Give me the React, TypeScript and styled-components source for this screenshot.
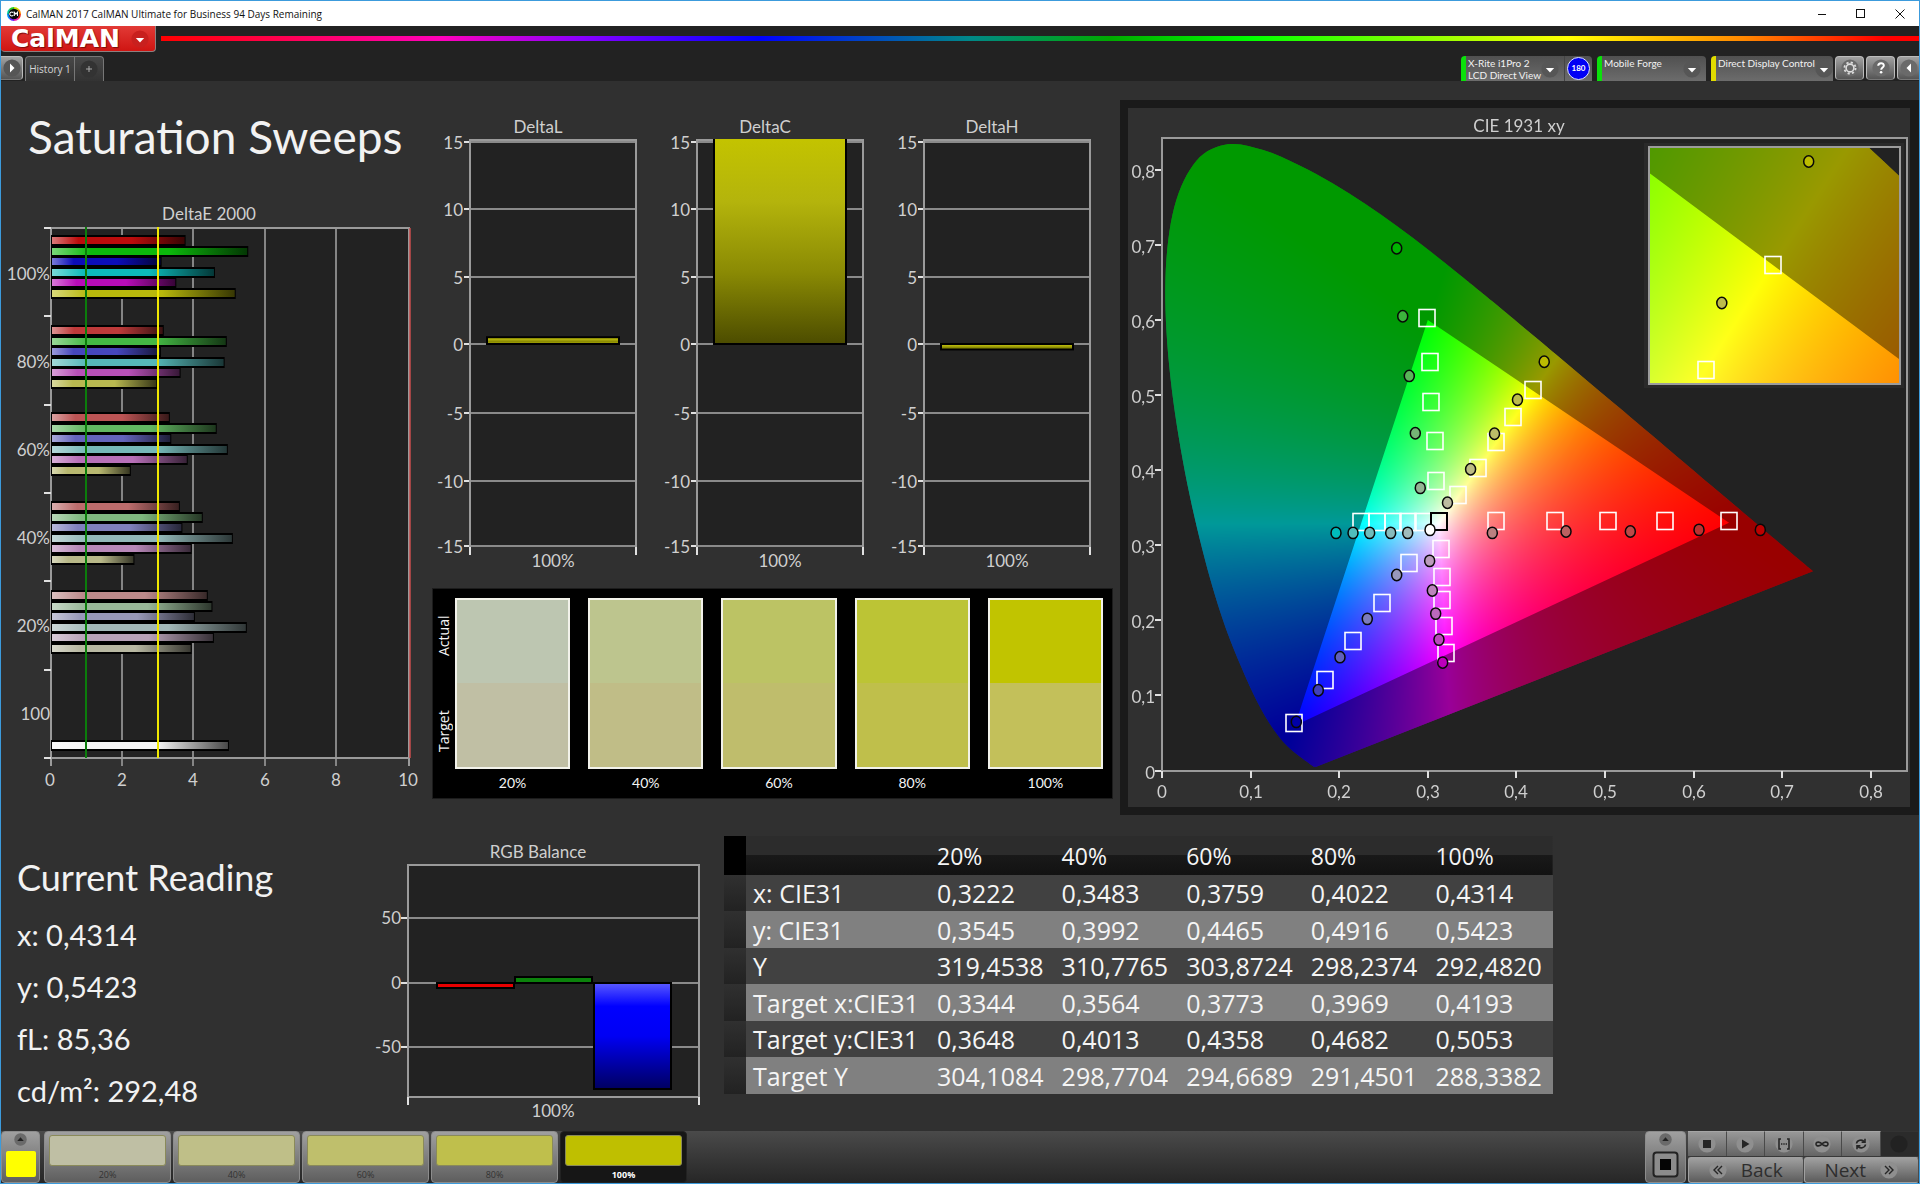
import React, { useLayoutEffect, useRef } from "react";
import styled, { createGlobalStyle, css } from "styled-components";

const UI = `"Open Sans", "Noto Sans", sans-serif`;
const CHART = `Lato, "Open Sans", sans-serif`;

const GlobalStyle = createGlobalStyle`
  *, *::before, *::after { box-sizing: border-box; }
  body { margin: 0; background: #303030; font-family: ${UI}; }
  button { font: inherit; color: inherit; border: 0; padding: 0; margin: 0; background: none; cursor: pointer; }
`;

const Window = styled.div`
  min-height: 100vh;
  display: flex;
  flex-direction: column;
  border: 1px solid #3c9bdc;
  background: #303030;
`;

/* ---------- title bar ---------- */

const TitleBar = styled.header`
  height: 25px;
  display: flex;
  align-items: center;
  gap: 5px;
  padding: 0 2px 0 6px;
  background: #fff;
  color: #111;
  font-size: 10px;
`;
const WindowTitle = styled.span`
  flex: 1;
`;
const WindowButton = styled.button`
  width: 34px;
  height: 25px;
  display: grid;
  place-items: center;
`;

/* ---------- brand + tab strip ---------- */

const Chrome = styled.div`
  background: #222;
`;
const BrandRow = styled.div`
  display: flex;
  align-items: flex-start;
  gap: 5px;
  height: 30px;
`;
const Brand = styled.button`
  width: 155px;
  height: 26px;
  display: flex;
  align-items: center;
  justify-content: space-between;
  padding: 0 6px 0 10px;
  border: 1px solid #8e8080;
  border-width: 0 1px 1px 0;
  border-radius: 0 0 4px 4px;
  background: linear-gradient(#e23a36, #cf1512);
  color: #fff;
  font-family: "DejaVu Sans", ${UI};
  font-size: 25px;
  line-height: 25px;
  font-weight: 700;
  text-shadow: 1px 1px 1px #7c0d0b;
`;
const Spectrum = styled.div`
  flex: 1;
  height: 5px;
  margin-top: 10px;
  background: linear-gradient(90deg, #f00 0%, #f0b 16%, #80f 24%, #00f 34%, #088 46%, #0a0 54%, #0f0 62%, #ff0 80%, #f80 90%, #f00 98%);
`;
const TabRow = styled.div`
  display: flex;
  justify-content: space-between;
  height: 25px;
`;
const TabGroup = styled.div`
  display: flex;
  align-items: flex-start;
`;
const raised = css`
  background: linear-gradient(#a2a2a2, #555);
  border: 1px solid #bdbdbd;
  border-bottom-color: #777;
  border-radius: 4px;
`;
const SquareButton = styled.button<{ $w: number; $edge?: "left" | "right" }>`
  ${raised}
  width: ${(p) => p.$w}px;
  height: 24px;
  display: grid;
  place-items: center;
  ${(p) => p.$edge === "left" && "border-radius: 0 4px 4px 0; border-left: 0; margin-right: 2px;"}
  ${(p) => p.$edge === "right" && "border-radius: 4px 0 0 4px; border-right: 0;"}
`;
const Tab = styled.button<{ $w: number; $last?: boolean }>`
  width: ${(p) => p.$w}px;
  height: 25px;
  display: grid;
  place-items: center;
  background: linear-gradient(#484848, #333);
  border: 1px solid #777;
  border-bottom: 0;
  border-left-width: ${(p) => (p.$last ? 0 : 1)}px;
  border-radius: ${(p) => (p.$last ? "0 4px 0 0" : "4px 0 0 0")};
  color: #d6d6d6;
  font-size: 10px;
`;
const DeviceGroup = styled.div`
  display: flex;
  align-items: flex-start;
  gap: 2px;
`;
const DeviceList = styled.div`
  display: flex;
  gap: 5px;
`;
const Device = styled.div<{ $color: string; $w: number }>`
  width: ${(p) => p.$w}px;
  height: 25px;
  display: flex;
  border-left: 5px solid ${(p) => p.$color};
  border-radius: 4px 4px 0 0;
  background: linear-gradient(#505050, #6c6c6c);
  color: #f2f2f2;
  font-family: ${CHART};
  font-size: 10px;
  line-height: 12px;
`;
const DeviceButton = styled.button`
  flex: 1;
  display: flex;
  justify-content: space-between;
  align-items: flex-start;
  padding: 1px 5px 0 2px;
  text-align: left;
  white-space: nowrap;
  svg { margin-top: 3px; }
`;
const Meter = styled.button`
  width: 30px;
  display: grid;
  place-items: center;
  border-left: 1px solid #444;
`;
const MeterDot = styled.span`
  width: 23px;
  height: 23px;
  border-radius: 50%;
  border: 1px solid #dfe3ff;
  background: #0000f5;
  color: #fff;
  font-size: 8px;
  line-height: 21px;
  font-weight: 700;
  text-align: center;
`;

/* ---------- workspace ---------- */

const Workspace = styled.main`
  flex: 1;
  background: #303030;
`;
const TopGrid = styled.div`
  display: grid;
  grid-template-columns: 431fr 688fr 799fr;
  align-items: start;
`;
const BottomGrid = styled.div`
  display: grid;
  grid-template-columns: 392fr 331fr 829fr 366fr;
  align-items: start;
`;
const Column = styled.section`
  min-width: 0;
`;
const PageTitle = styled.h1`
  margin: 0;
  padding: 24px 0 0 27px;
  height: 119px;
  color: #f2f2f2;
  font-family: ${CHART};
  font-size: 46px;
  line-height: 64px;
  font-weight: 400;
  white-space: nowrap;
`;
const Plot = styled.svg`
  display: block;
  width: 100%;
  height: auto;
  overflow: visible;
  font-family: ${CHART};
  font-size: 17px;
  fill: #cfcfcf;
`;
const DeltaColumn = styled(Column)`
  padding: 29px 7px 0 0;
`;
const DeltaRow = styled.div`
  display: grid;
  grid-template-columns: repeat(3, 1fr);
`;

const SwatchPanel = styled.div`
  height: 211px;
  display: grid;
  grid-template-columns: 20px 1fr;
  padding: 9px 9px 0 2px;
  background: #000;
  color: #f4f4f4;
  border: 1px solid #1c1c1c;
`;
const SwatchRow = styled.div`
  display: grid;
  grid-template-columns: repeat(5, 1fr);
  column-gap: 18px;
`;
const SideLabels = styled.div`
  display: grid;
  grid-template-rows: 76px 114px;
  font-size: 14px;
`;
const SideLabel = styled.span`
  writing-mode: vertical-rl;
  transform: rotate(180deg);
  text-align: center;
  line-height: 18px;
`;
const Swatch = styled.figure`
  margin: 0;
  font-family: ${CHART};
  font-size: 14px;
  line-height: 28px;
  text-align: center;
`;
const SwatchColors = styled.div<{ $actual: string; $target: string }>`
  height: 171px;
  border: 2px solid #f2f2ea;
  background: linear-gradient(${(p) => p.$actual} 50%, ${(p) => p.$target} 50%);
`;

const CiePanel = styled(Column)`
  margin-top: 19px;
  padding: 8px 9px 8px 8px;
  background: #1a1a1a;
`;
const CieStack = styled.div`
  display: grid;
  background: #303030;
  > * { grid-area: 1 / 1; }
`;
const Gamut = styled.canvas`
  display: block;
  width: 100%;
`;

const Reading = styled(Column)`
  padding: 36px 0 0 16px;
  color: #f2f2f2;
  font-family: ${CHART};
`;
const ReadingTitle = styled.h2`
  margin: 0;
  font-size: 36px;
  line-height: 52px;
  font-weight: 400;
`;
const ReadingList = styled.ul`
  list-style: none;
  margin: 0;
  padding: 6px 0 0;
  font-size: 29px;
  line-height: 52px;
`;
const Balance = styled(Column)`
  padding-top: 25px;
`;

const DataTable = styled.table`
  width: 100%;
  margin-top: 21px;
  border-collapse: collapse;
  table-layout: fixed;
  color: #f5f5f5;
  font-size: 25px;
  line-height: 32px;
  text-align: left;
  white-space: nowrap;
  th, td { padding: 0 0 0 7px; font-weight: 400; }
  thead tr { height: 39px; background: linear-gradient(#2c2c2c 50%, #191919 50%, #121212); }
  thead th { font-size: 23px; }
  thead td:first-child { background: #000; }
  tbody tr { height: 36px; background: #414141; }
  tbody tr:nth-child(even) { height: 37px; background: #808080; }
  tbody td:first-child { background: linear-gradient(#303030, #222); }
`;

/* ---------- bottom bar ---------- */

const Footer = styled.footer`
  display: flex;
  justify-content: space-between;
  height: 52px;
  background: linear-gradient(#4a4a4a, #262626);
`;
const Patches = styled.div`
  display: flex;
  gap: 2px;
`;
const panelButton = css`
  background: linear-gradient(#a0a0a0, #5e5e5e);
  border: 1px solid #8c8c8c;
  border-radius: 4px;
`;
const CurrentPatch = styled.button`
  ${panelButton}
  width: 39px;
  margin-right: 2px;
  display: flex;
  flex-direction: column;
  align-items: center;
  justify-content: space-between;
  padding: 1px 0 5px;
`;
const CurrentColor = styled.span`
  width: 30px;
  height: 26px;
  border-radius: 2px;
  background: #ff0;
`;
const Patch = styled.button<{ $active?: boolean }>`
  ${panelButton}
  width: 127px;
  padding: 3px 4px 0;
  color: #333;
  font-size: 9px;
  line-height: 18px;
  ${(p) =>
    p.$active &&
    css`
      background: #161616;
      border-color: #222;
      color: #fff;
      font-weight: 700;
    `}
`;
const PatchColor = styled.span<{ $color: string }>`
  display: block;
  height: 31px;
  border: 1px solid #8a8a5a;
  border-radius: 3px;
  background: ${(p) => p.$color};
`;
const Transport = styled.div`
  display: flex;
  gap: 2px;
`;
const PatternButton = styled.button`
  ${panelButton}
  width: 41px;
  display: grid;
  grid-template-rows: 15px 1fr;
  place-items: center;
`;
const TransportGrid = styled.div`
  width: 231px;
  display: grid;
  grid-template-columns: repeat(6, 1fr);
  grid-template-rows: 25px 26px;
  row-gap: 1px;
`;
const TransportButton = styled.button<{ $off?: boolean }>`
  display: grid;
  place-items: center;
  border-right: 1px solid #4a4a4a;
  border-top: 1px solid #a5a5a5;
  background: linear-gradient(#989898, #646464);
  ${(p) => p.$off && "background: #2b2b2b; border-color: #333;"}
`;
const NavButton = styled.button`
  grid-column: span 3;
  display: flex;
  align-items: center;
  justify-content: center;
  gap: 14px;
  border: 1px solid #a0a0a0;
  border-right-color: #4a4a4a;
  border-radius: 3px;
  background: linear-gradient(#a0a0a0, #5c5c5c);
  color: #2e2e2e;
  font-size: 19px;
  line-height: 22px;
`;

/* ---------- icons ---------- */

function RoundIcon({ size = 18, fill = "#565656", children }: { size?: number; fill?: string; children?: React.ReactNode }) {
  return (
    <svg width={size} height={size} viewBox="0 0 18 18" aria-hidden="true">
      <circle cx="9" cy="9" r="8.6" fill={fill} />
      {children}
    </svg>
  );
}
const DownArrow = () => <path d="M4.8 8h8.4L9 12.4z" fill="#fff" />;

function AppLogo() {
  const hues = ["#e22", "#e2a", "#62f", "#08f", "#0c9", "#2c2", "#cd0", "#f80"];
  return (
    <svg width="14" height="14" viewBox="0 0 14 14" aria-hidden="true">
      {hues.map((c, i) => (
        <circle key={c} cx="7" cy="7" r="6" fill="none" stroke={c} strokeWidth="2" strokeDasharray="4.8 40" transform={`rotate(${i * 45} 7 7)`} />
      ))}
      <circle cx="7" cy="7" r="5.3" fill="#080808" />
      <path d="M6.2 5.6a2 2 0 1 0 0 2.8M7.3 9V5.2l1.6 2 1.6-2V9" fill="none" stroke="#fff" strokeWidth="1.1" />
    </svg>
  );
}

/* ---------- chart data ---------- */

const deltaE = [
  { label: "100%", values: [3.76, 5.51, 3.09, 4.58, 3.5, 5.16], colors: ["#bc0c0c", "#0cb80c", "#0c0cb8", "#0cbaba", "#b80cb8", "#b8b80c"] },
  { label: "80%", values: [3.15, 4.91, 3.07, 4.85, 3.62, 2.97], colors: ["#be3a3a", "#44b844", "#4646bc", "#56b8b8", "#b850b8", "#b8b850"] },
  { label: "60%", values: [3.32, 4.63, 3.36, 4.94, 3.82, 2.23], colors: ["#bc5454", "#62b862", "#6464bc", "#76b8b8", "#b870b8", "#b8b870"] },
  { label: "40%", values: [3.6, 4.24, 3.67, 5.08, 3.93, 2.33], colors: ["#bc6c6c", "#7eb87e", "#8080bc", "#92b8b8", "#b888b8", "#b8b888"] },
  { label: "20%", values: [4.38, 4.51, 4.02, 5.47, 4.55, 3.93], colors: ["#bc8a8a", "#98b898", "#9898b8", "#a2b8b8", "#b8a2b8", "#b8b8a2"] },
];
const groupTop = [36, 126, 213, 302, 391];

function DeltaEChart() {
  const left = 50, top = 28, bottom = 558, unit = 35.8;
  const x = (v: number) => Math.round(left + v * unit);
  const bars = deltaE.flatMap((g, gi) =>
    g.values.map((v, i) => ({ v, color: g.colors[i], y: groupTop[gi] + Math.round(i * 10.5), id: `${gi}-${i}` })),
  );
  bars.push({ v: 4.97, color: "#f4f4f4", y: 541, id: "white" });
  return (
    <Plot viewBox="0 0 431 600" role="img" aria-label="DeltaE 2000">
      <defs>
        {bars.map((b) => (
          <linearGradient id={`bar-${b.id}`} key={b.id}>
            <stop offset="0" stopColor={b.color} />
            <stop offset="0.6" stopColor={b.color} />
            <stop offset="1" stopColor={b.color} stopOpacity="0.3" />
          </linearGradient>
        ))}
        <linearGradient id="bar-shine">
          <stop offset="0" stopColor="#fff" stopOpacity="0.45" />
          <stop offset="0.2" stopColor="#fff" stopOpacity="0" />
        </linearGradient>
      </defs>
      <text x="208" y="20" textAnchor="middle">DeltaE 2000</text>
      <rect x={left} y={top} width="358" height={bottom - top} fill="#222" />
      {[2, 4, 6, 8].map((v) => <path key={v} d={`M${x(v) - 1} ${top}V${bottom + 8}`} stroke="#858585" strokeWidth="2" />)}
      <path d={`M44 ${top}H408V${bottom + 8}M${left} ${top}V${bottom + 8}M44 ${bottom}H408`} fill="none" stroke="#9a9a9a" strokeWidth="2" />
      {[0, 1, 2, 3, 4, 5, 6].map((i) => <path key={i} d={`M43 ${top + Math.round(i * 88.3)}h7`} stroke="#e0e0e0" strokeWidth="2" />)}
      {bars.map((b) => (
        <g key={b.id}>
          <rect x={left} y={b.y - 1} width={b.v * unit} height="11" fill="#000" />
          <rect x={left + 1} y={b.y + 1} width={b.v * unit - 2} height="7" fill={`url(#bar-${b.id})`} />
          <rect x={left + 1} y={b.y + 1} width={b.v * unit - 2} height="7" fill="url(#bar-shine)" />
        </g>
      ))}
      <path d={`M85 ${top - 1}V${bottom}`} stroke="#0b7d0b" strokeWidth="2" />
      <path d={`M157 ${top - 1}V${bottom}`} stroke="#f0e800" strokeWidth="2" />
      <path d={`M409 ${top}V${bottom}`} stroke="#c84c4c" strokeWidth="1.5" />
      {[...deltaE.map((g) => g.label), "100"].map((l, i) => (
        <text key={i} x="49" y={80 + i * 88} textAnchor="end">{l}</text>
      ))}
      {[0, 2, 4, 6, 8, 10].map((v) => <text key={v} x={x(v) - 1} y="586" textAnchor="middle">{v}</text>)}
    </Plot>
  );
}

const deltaAxis = [
  { v: 15, y: 32 }, { v: 10, y: 99 }, { v: 5, y: 167 }, { v: 0, y: 234 }, { v: -5, y: 303 }, { v: -10, y: 371 }, { v: -15, y: 436 },
];

function DeltaChart({ title, value }: { title: string; value: number }) {
  const zero = 234, unit = 13.54;
  const end = Math.max(30, zero - value * unit);
  const y0 = Math.min(zero, end), h = Math.abs(end - zero);
  const id = `delta-${title}`;
  return (
    <Plot viewBox="0 0 227 478" role="img" aria-label={title}>
      <defs>
        <linearGradient id={id} x1="0" y1="0" x2="0" y2="1">
          <stop offset="0" stopColor="#c3c300" />
          <stop offset="0.3" stopColor="#b4b40c" />
          <stop offset="0.65" stopColor="#8a8a04" />
          <stop offset="1" stopColor={h < 20 ? "#b0b000" : "#4c4c00"} />
        </linearGradient>
      </defs>
      <text x="106" y="23" textAnchor="middle">{title}</text>
      <rect x="38" y="30" width="166" height="406" fill="#222" />
      {deltaAxis.map(({ v, y }) => (
        <g key={v}>
          <path d={`M38 ${y}H204`} stroke="#8a8a8a" strokeWidth="2" />
          <path d={`M32 ${y}h6`} stroke="#e0e0e0" strokeWidth="2" />
          <text x="31" y={y + 7} textAnchor="end">{v}</text>
        </g>
      ))}
      <path d="M38 444V30H204V444" fill="none" stroke="#9a9a9a" strokeWidth="2" />
      <path d="M38 437v8M204 437v8" stroke="#e0e0e0" strokeWidth="2" />
      <rect x="55" y={y0} width="132" height={h} fill={`url(#${id})`} stroke="#000" strokeWidth="2" />
      {h > 100 && <path d="M56 30H186" stroke="#c3c300" strokeWidth="2" />}
      <text x="121" y="457" textAnchor="middle">100%</text>
    </Plot>
  );
}

function BalanceChart() {
  return (
    <Plot viewBox="0 0 331 285" role="img" aria-label="RGB Balance">
      <defs>
        <linearGradient id="blue-bar" x1="0" y1="0" x2="0" y2="1">
          <stop offset="0" stopColor="#5a5aff" />
          <stop offset="0.22" stopColor="#0000ff" />
          <stop offset="0.5" stopColor="#0000f4" />
          <stop offset="1" stopColor="#000060" />
        </linearGradient>
      </defs>
      <text x="145" y="18" textAnchor="middle">RGB Balance</text>
      <rect x="15" y="25" width="291" height="232" fill="#222" />
      {[{ v: "50", y: 78 }, { v: "0", y: 143 }, { v: "-50", y: 207 }].map((t) => (
        <g key={t.v}>
          <path d={`M15 ${t.y}H306`} stroke="#8a8a8a" strokeWidth="2" />
          <path d={`M8 ${t.y}h7`} stroke="#e0e0e0" strokeWidth="2" />
          <text x="8" y={t.y + 6} textAnchor="end">{t.v}</text>
        </g>
      ))}
      <path d="M15 257V25H306V257Z" fill="none" stroke="#9a9a9a" strokeWidth="2" />
      <path d="M15 257v8M306 257v8" stroke="#e0e0e0" strokeWidth="2" />
      <rect x="44" y="143" width="77" height="5" fill="#e80000" stroke="#000" strokeWidth="2" />
      <rect x="122" y="137" width="77" height="6" fill="#0c820c" stroke="#000" strokeWidth="2" />
      <rect x="201" y="143" width="77" height="106" fill="url(#blue-bar)" stroke="#000" strokeWidth="2" />
      <text x="160" y="277" textAnchor="middle">100%</text>
    </Plot>
  );
}

/* ---------- CIE 1931 diagram ---------- */

type Pt = [number, number];
interface View { x0: number; y0: number; sx: number; sy: number; left: number; top: number; width: number; height: number }

const mainView: View = { x0: 34, y0: 662.5, sx: 886, sy: 751, left: 34, top: 30, width: 745, height: 632 };
const zoomView: View = { x0: 680.7 - 0.4314 * 2976, y0: 53.5 + 0.5423 * 2791, sx: 2976, sy: 2791, left: 521, top: 39, width: 251, height: 237 };

const locus: Pt[] = [
  [0.1741, 0.005], [0.1714, 0.0051], [0.1689, 0.0069], [0.1644, 0.0109], [0.1566, 0.0177], [0.144, 0.0297], [0.1355, 0.0399],
  [0.1241, 0.0578], [0.1096, 0.0868], [0.0913, 0.1327], [0.0687, 0.2007], [0.0454, 0.295], [0.0235, 0.4127], [0.0082, 0.5384],
  [0.0039, 0.6548], [0.0139, 0.7502], [0.0389, 0.812], [0.0743, 0.8338], [0.1142, 0.8262], [0.1547, 0.8059], [0.1929, 0.7816],
  [0.2296, 0.7543], [0.2658, 0.7243], [0.3016, 0.6923], [0.3373, 0.6589], [0.3731, 0.6245], [0.4441, 0.5547], [0.5125, 0.4866],
  [0.5752, 0.4242], [0.627, 0.3725], [0.6915, 0.3083], [0.719, 0.2809], [0.7347, 0.2653],
];
const primaries: Pt[] = [[0.64, 0.33], [0.3, 0.6], [0.15, 0.06]];

const toPx = (v: View, [x, y]: Pt): Pt => [v.x0 + x * v.sx, v.y0 - y * v.sy];

function locusPath(v: View) {
  const p = locus.map((q) => toPx(v, q));
  const path = new Path2D();
  path.moveTo(...p[0]);
  for (let i = 0; i < p.length - 1; i++) {
    const a = p[Math.max(0, i - 1)], b = p[i], c = p[i + 1], d = p[Math.min(p.length - 1, i + 2)];
    path.bezierCurveTo(b[0] + (c[0] - a[0]) / 6, b[1] + (c[1] - a[1]) / 6, c[0] - (d[0] - b[0]) / 6, c[1] - (d[1] - b[1]) / 6, c[0], c[1]);
  }
  path.closePath();
  return path;
}

function paintView(ctx: CanvasRenderingContext2D, v: View) {
  const layer = document.createElement("canvas");
  layer.width = v.width;
  layer.height = v.height;
  const lctx = layer.getContext("2d")!;
  const img = lctx.createImageData(v.width, v.height);
  for (let j = 0; j < v.height; j++) {
    const y = Math.max(0.0005, (v.y0 - v.top - j - 0.5) / v.sy);
    for (let i = 0; i < v.width; i++) {
      const x = (v.left + i + 0.5 - v.x0) / v.sx;
      const X = x / y, Z = (1 - x - y) / y;
      const r = Math.max(0, 3.2406 * X - 1.5372 - 0.4986 * Z);
      const g = Math.max(0, -0.9689 * X + 1.8758 + 0.0415 * Z);
      const b = Math.max(0, 0.0557 * X - 0.204 + 1.057 * Z);
      const m = Math.max(r, g, b) || 1;
      const k = (j * v.width + i) * 4;
      img.data[k] = (r / m) * 255;
      img.data[k + 1] = (g / m) * 255;
      img.data[k + 2] = (b / m) * 255;
      img.data[k + 3] = 255;
    }
  }
  lctx.putImageData(img, 0, 0);

  ctx.save();
  ctx.beginPath();
  ctx.rect(v.left, v.top, v.width, v.height);
  ctx.clip();
  ctx.fillStyle = "#222";
  ctx.fillRect(v.left, v.top, v.width, v.height);
  ctx.clip(locusPath(v));
  ctx.drawImage(layer, v.left, v.top);
  ctx.beginPath();
  ctx.rect(v.left, v.top, v.width, v.height);
  primaries.forEach((q, i) => {
    const [px, py] = toPx(v, q);
    if (i) ctx.lineTo(px, py);
    else ctx.moveTo(px, py);
  });
  ctx.closePath();
  ctx.fillStyle = "rgba(0,0,0,0.4)";
  ctx.fill("evenodd");
  ctx.restore();
}

const targets: Pt[] = [
  [0.299, 0.6027], [0.3025, 0.544], [0.3041, 0.4908], [0.3081, 0.4393], [0.3098, 0.3856],
  [0.3344, 0.3668], [0.3564, 0.4033], [0.3773, 0.4378], [0.396, 0.4702], [0.4193, 0.5073],
  [0.3766, 0.3327], [0.4435, 0.3327], [0.5034, 0.3327], [0.5677, 0.3327], [0.64, 0.3327],
  [0.2246, 0.331], [0.2423, 0.331], [0.2604, 0.331], [0.2777, 0.331], [0.2946, 0.331],
  [0.2793, 0.2764], [0.248, 0.2227], [0.2161, 0.1722], [0.1837, 0.121], [0.1487, 0.063],
  [0.3146, 0.2951], [0.3164, 0.2574], [0.3164, 0.2276], [0.3179, 0.1929], [0.3202, 0.1562],
];
const readings: [number, number, string][] = [
  [0.2649, 0.6954, "#00b400"], [0.2717, 0.6049, "#3cb43c"], [0.2791, 0.5254, "#5ab45a"], [0.2859, 0.4491, "#76b476"], [0.2915, 0.3763, "#94b494"],
  [0.3222, 0.3565, "#bcbca0"], [0.3483, 0.4012, "#bcbc84"], [0.3753, 0.4485, "#bcbc68"], [0.4012, 0.4936, "#bcbc4c"], [0.4314, 0.5443, "#bcbc00"],
  [0.3728, 0.3164, "#bc8080"], [0.456, 0.3182, "#bc6060"], [0.5286, 0.3182, "#bc4848"], [0.6061, 0.3204, "#bc3030"], [0.6753, 0.3204, "#bc0000"],
  [0.2773, 0.3164, "#a0bcbc"], [0.2581, 0.3164, "#88bcbc"], [0.2344, 0.3164, "#70bcbc"], [0.2156, 0.3164, "#50bcbc"], [0.1964, 0.3164, "#00bcbc"],
  [0.2649, 0.2604, "#9898bc"], [0.2317, 0.2019, "#7c7cbc"], [0.2009, 0.1509, "#6060bc"], [0.1764, 0.1069, "#4040bc"], [0.1516, 0.0647, "#0000a8"],
  [0.3021, 0.2791, "#bc9cbc"], [0.3051, 0.2396, "#bc84bc"], [0.3089, 0.2089, "#bc68bc"], [0.3126, 0.1743, "#bc48bc"], [0.3168, 0.1437, "#bc00bc"],
  [0.3025, 0.3204, "#ffffff"],
];

function Marker({ at, color }: { at: Pt; color?: string }) {
  return color ? (
    <ellipse cx={at[0]} cy={at[1]} rx="5" ry="5.7" fill={color} stroke="#080808" strokeWidth="1.5" />
  ) : (
    <rect x={Math.round(at[0]) - 8} y={Math.round(at[1]) - 8.5} width="16" height="17" fill="none" stroke="#fff" strokeWidth="1.6" />
  );
}

function CieDiagram() {
  const ref = useRef<HTMLCanvasElement>(null);
  useLayoutEffect(() => {
    const ctx = ref.current?.getContext("2d");
    if (!ctx) return;
    ctx.clearRect(0, 0, 782, 699);
    paintView(ctx, mainView);
    ctx.fillStyle = "#2a2a2a";
    ctx.fillRect(zoomView.left - 5, zoomView.top - 4, zoomView.width + 9, zoomView.height + 8);
    paintView(ctx, zoomView);
  }, []);
  const tenths = [0, 1, 2, 3, 4, 5, 6, 7, 8];
  const label = (t: number) => (t ? `0,${t}` : "0");
  return (
    <CieStack>
      <Gamut ref={ref} width={782} height={699} />
      <Plot viewBox="0 0 782 699" role="img" aria-label="CIE 1931 xy">
        <text x="391" y="24" textAnchor="middle">CIE 1931 xy</text>
        <rect x="34" y="30" width="745" height="633" fill="none" stroke="#9a9a9a" strokeWidth="2" />
        {tenths.map((t) => {
          const [px, py] = toPx(mainView, [t / 10, t / 10]).map(Math.round);
          return (
            <g key={t}>
              <path d={`M${px} 663v7M27 ${py}h6`} stroke="#e0e0e0" strokeWidth="2" />
              <text x={px} y="690" textAnchor="middle">{label(t)}</text>
              <text x="27" y={py + 8} textAnchor="end">{label(t)}</text>
            </g>
          );
        })}
        {targets.map((p) => <Marker key={p.join()} at={toPx(mainView, p)} />)}
        <rect x="303" y="405" width="16" height="17" fill="none" stroke="#000" strokeWidth="2" />
        {readings.map(([x, y, c]) => <Marker key={`${x},${y}`} at={toPx(mainView, [x, y])} color={c} />)}
        <rect x="521" y="39" width="251" height="237" fill="none" stroke="#9c9c9c" strokeWidth="2" />
        <Marker at={toPx(zoomView, [0.4193, 0.5053])} />
        <Marker at={toPx(zoomView, [0.3969, 0.4677])} />
        <Marker at={toPx(zoomView, [0.4314, 0.5423])} color="#bcbc00" />
        <Marker at={toPx(zoomView, [0.4022, 0.4916])} color="#bcbc4c" />
      </Plot>
    </CieStack>
  );
}

/* ---------- tables and patches ---------- */

const steps = ["20%", "40%", "60%", "80%", "100%"];
const rows: [string, ...string[]][] = [
  ["x: CIE31", "0,3222", "0,3483", "0,3759", "0,4022", "0,4314"],
  ["y: CIE31", "0,3545", "0,3992", "0,4465", "0,4916", "0,5423"],
  ["Y", "319,4538", "310,7765", "303,8724", "298,2374", "292,4820"],
  ["Target x:CIE31", "0,3344", "0,3564", "0,3773", "0,3969", "0,4193"],
  ["Target y:CIE31", "0,3648", "0,4013", "0,4358", "0,4682", "0,5053"],
  ["Target Y", "304,1084", "298,7704", "294,6689", "291,4501", "288,3382"],
];
const swatches = [
  ["#bdc6b1", "#c0bfa4"],
  ["#bdc58e", "#c0bd87"],
  ["#bcc364", "#bfbd6c"],
  ["#bcc435", "#bfbf4b"],
  ["#c1c400", "#c3c05a"],
];
const patches = ["#bfbfa4", "#bfbf88", "#bfbf6c", "#bfbf4c", "#bfbf00"];

const glyph = { stroke: "#262626", strokeWidth: 1.6, fill: "none" };
const transport: { name: string; icon: React.ReactNode }[] = [
  { name: "Stop", icon: <rect x="5" y="5" width="8" height="8" fill="#262626" /> },
  { name: "Play", icon: <path d="M6 4.5l7.5 4.5L6 13.5z" fill="#262626" /> },
  { name: "Read series", icon: <path d="M6 4H4v10h2M12 4h2v10h-2M6 9h1.4M8.300 9h1.400M10.600 9H12" {...glyph} /> },
  { name: "Continuous", icon: <path d="M9 9C7.500 6.800 3 6.200 3 9s4.500 2.200 6 0 6-2.800 6 0-4.500 2.200-6 0z" {...glyph} /> },
  { name: "Refresh", icon: <path d="M4.500 8.500c.5-3.500 5.500-4.500 7.800-1.800M13 3.800v3.400H9.600M13.500 9.500c-.5 3.500-5.500 4.500-7.800 1.800M5 14.200v-3.400h3.400" {...glyph} /> },
];

export default function App() {
  return (
    <Window>
      <GlobalStyle />
      <TitleBar>
        <AppLogo />
        <WindowTitle>CalMAN 2017 CalMAN Ultimate for Business 94 Days Remaining</WindowTitle>
        <WindowButton aria-label="Minimize"><svg width="10" height="10"><path d="M1 5.500h8" stroke="#111" /></svg></WindowButton>
        <WindowButton aria-label="Maximize"><svg width="10" height="10"><rect x="0.5" y="0.5" width="8" height="8" fill="none" stroke="#111" /></svg></WindowButton>
        <WindowButton aria-label="Close"><svg width="10" height="10"><path d="M.5.5l9 9M9.500.5l-9 9" stroke="#111" /></svg></WindowButton>
      </TitleBar>
      <Chrome>
        <BrandRow>
          <Brand aria-haspopup="menu">
            CalMAN
            <RoundIcon fill="#c8201e"><DownArrow /></RoundIcon>
          </Brand>
          <Spectrum />
        </BrandRow>
        <TabRow>
          <TabGroup>
            <SquareButton $w={22} $edge="left" aria-label="Show panel">
              <RoundIcon><path d="M7 4.500v9l4.500-4.500z" fill="#fff" /></RoundIcon>
            </SquareButton>
            <Tab $w={50}>History 1</Tab>
            <Tab $w={29} $last aria-label="Add history">
              <RoundIcon fill="#333"><path d="M9 6v6M6 9h6" stroke="#aaa" strokeWidth="1" /></RoundIcon>
            </Tab>
          </TabGroup>
          <DeviceGroup>
            <DeviceList>
              <Device $color="#0be00b" $w={131}>
                <DeviceButton aria-haspopup="menu">
                  <span>X-Rite i1Pro 2<br />LCD Direct View</span>
                  <RoundIcon><DownArrow /></RoundIcon>
                </DeviceButton>
                <Meter aria-label="Meter 180"><MeterDot>180</MeterDot></Meter>
              </Device>
              <Device $color="#0be00b" $w={109}>
                <DeviceButton aria-haspopup="menu"><span>Mobile Forge</span><RoundIcon><DownArrow /></RoundIcon></DeviceButton>
              </Device>
              <Device $color="#e0dc00" $w={122}>
                <DeviceButton aria-haspopup="menu"><span>Direct Display Control</span><RoundIcon><DownArrow /></RoundIcon></DeviceButton>
              </Device>
            </DeviceList>
            <SquareButton $w={29} aria-label="Settings">
              <RoundIcon fill="#6a6a6a">
                <circle cx="9" cy="9" r="3.900" fill="none" stroke="#ddd" strokeWidth="1.600" />
                <circle cx="9" cy="9" r="5.600" fill="none" stroke="#ddd" strokeWidth="1.800" strokeDasharray="2.200 2.200" />
              </RoundIcon>
            </SquareButton>
            <SquareButton $w={29} aria-label="Help">
              <RoundIcon fill="#6a6a6a">
                <path d="M6.200 6.800c.2-3.600 5.800-3.400 5.600 0-.1 1.700-2.600 1.900-2.600 3.900" fill="none" stroke="#fff" strokeWidth="2" />
                <circle cx="9.100" cy="13.300" r="1.300" fill="#fff" />
              </RoundIcon>
            </SquareButton>
            <SquareButton $w={22} $edge="right" aria-label="Hide panel">
              <RoundIcon fill="#6a6a6a"><path d="M11 4.500v9L6.500 9z" fill="#fff" /></RoundIcon>
            </SquareButton>
          </DeviceGroup>
        </TabRow>
      </Chrome>

      <Workspace>
        <TopGrid>
          <Column>
            <PageTitle>Saturation Sweeps</PageTitle>
            <DeltaEChart />
          </Column>
          <DeltaColumn>
            <DeltaRow>
              <DeltaChart title="DeltaL" value={0.5} />
              <DeltaChart title="DeltaC" value={20} />
              <DeltaChart title="DeltaH" value={-0.4} />
            </DeltaRow>
            <SwatchPanel>
              <SideLabels>
                <SideLabel>Actual</SideLabel>
                <SideLabel>Target</SideLabel>
              </SideLabels>
              <SwatchRow>
                {swatches.map(([actual, target], i) => (
                  <Swatch key={steps[i]}>
                    <SwatchColors $actual={actual} $target={target} />
                    <figcaption>{steps[i]}</figcaption>
                  </Swatch>
                ))}
              </SwatchRow>
            </SwatchPanel>
          </DeltaColumn>
          <CiePanel>
            <CieDiagram />
          </CiePanel>
        </TopGrid>
        <BottomGrid>
          <Reading>
            <ReadingTitle>Current Reading</ReadingTitle>
            <ReadingList>
              <li>x: 0,4314</li>
              <li>y: 0,5423</li>
              <li>fL: 85,36</li>
              <li>cd/m²: 292,48</li>
            </ReadingList>
          </Reading>
          <Balance>
            <BalanceChart />
          </Balance>
          <DataTable>
            <colgroup>
              <col style={{ width: "22px" }} />
              <col style={{ width: "184px" }} />
              {steps.map((s) => <col key={s} />)}
            </colgroup>
            <thead>
              <tr>
                <td />
                <td />
                {steps.map((s) => <th key={s} scope="col">{s}</th>)}
              </tr>
            </thead>
            <tbody>
              {rows.map(([name, ...values]) => (
                <tr key={name}>
                  <td />
                  <th scope="row">{name}</th>
                  {values.map((v) => <td key={v}>{v}</td>)}
                </tr>
              ))}
            </tbody>
          </DataTable>
        </BottomGrid>
      </Workspace>

      <Footer>
        <Patches>
          <CurrentPatch aria-label="Current patch">
            <RoundIcon size={13} fill="#6a6a6a"><path d="M4.500 11h9L9 6z" fill="#222" /></RoundIcon>
            <CurrentColor />
          </CurrentPatch>
          {steps.map((s, i) => (
            <Patch key={s} $active={i === 4}>
              <PatchColor $color={patches[i]} />
              {s}
            </Patch>
          ))}
        </Patches>
        <Transport>
          <PatternButton aria-label="Pattern">
            <RoundIcon size={13} fill="#6a6a6a"><path d="M4.500 11h9L9 6z" fill="#222" /></RoundIcon>
            <svg width="27" height="27" viewBox="0 0 27 27" aria-hidden="true">
              <rect x="1.500" y="1.500" width="24" height="24" rx="3" fill="#8c8c8c" stroke="#222" strokeWidth="2" />
              <rect x="8" y="8" width="11" height="11" fill="#050505" />
            </svg>
          </PatternButton>
          <TransportGrid>
            {transport.map((t) => (
              <TransportButton key={t.name} aria-label={t.name}>
                <RoundIcon fill="#8f8f8f">{t.icon}</RoundIcon>
              </TransportButton>
            ))}
            <TransportButton $off aria-label="Status">
              <RoundIcon fill="#222" />
            </TransportButton>
            <NavButton>
              <RoundIcon fill="#8f8f8f"><path d="M9 5L5 9l4 4M13 5L9 9l4 4" stroke="#262626" strokeWidth="1.400" fill="none" /></RoundIcon>
              Back
            </NavButton>
            <NavButton>
              Next
              <RoundIcon fill="#8f8f8f"><path d="M5 5l4 4-4 4M9 5l4 4-4 4" stroke="#262626" strokeWidth="1.400" fill="none" /></RoundIcon>
            </NavButton>
          </TransportGrid>
        </Transport>
      </Footer>
    </Window>
  );
}
